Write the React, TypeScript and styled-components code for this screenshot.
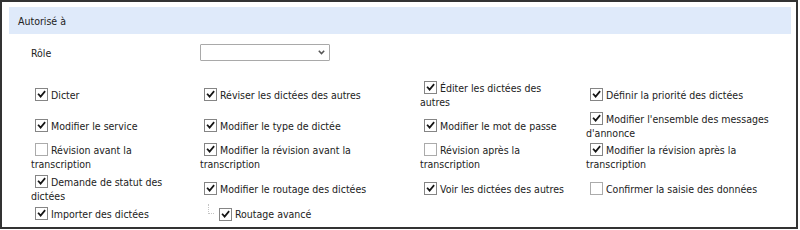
import React from "react";
import styled, { createGlobalStyle } from "styled-components";

const GlobalStyle = createGlobalStyle`
  html, body {
    margin: 0;
    padding: 0;
    background: #ffffff;
  }
  body {
    font-family: "DejaVu Sans Condensed", "DejaVu Sans", sans-serif;
    font-stretch: condensed;
    font-size: 10.5px;
    color: #222222;
  }
`;

const Frame = styled.section`
  box-sizing: border-box;
  width: 798px;
  height: 229px;
  border: 2px solid #333333;
  padding: 5px 5px 0 7px;
  background: #ffffff;
`;

const Header = styled.div`
  height: 27px;
  display: flex;
  align-items: center;
  padding-left: 9px;
  background: #dfeafa;
`;

const Body = styled.div`
  padding-left: 22px;
`;

const Grid = styled.div`
  display: grid;
  grid-template-columns: 149px 200px 146px 195px;
  column-gap: 20px;
`;

const RoleRow = styled(Grid)`
  margin-top: 10px;
  height: 17px;
  align-items: center;
`;

const RoleLabel = styled.span`
  line-height: 14px;
`;

const SelectWrap = styled.div`
  position: relative;
  width: 130px;
  height: 17px;
`;

const Select = styled.select`
  appearance: none;
  box-sizing: border-box;
  width: 100%;
  height: 100%;
  margin: 0;
  border: 1px solid #a9a9a9;
  border-radius: 1px;
  background: #ffffff;
  font: inherit;
`;

const Chevron = styled.svg`
  position: absolute;
  right: 5px;
  top: 6px;
  pointer-events: none;
`;

const Options = styled(Grid)`
  margin-top: 18px;
  grid-template-rows: 31px 31px 32px 31px 20px;
  align-items: center;
`;

const Cell = styled.label`
  display: block;
  line-height: 14px;
`;

const ChildCell = styled.label`
  display: flex;
  align-items: center;
  line-height: 14px;
`;

const Box = styled.span<{ $checked: boolean }>`
  display: inline-block;
  flex: none;
  box-sizing: border-box;
  width: 13px;
  height: 13px;
  margin: 0 3px 0 4px;
  vertical-align: -2px;
  border: 1px solid ${({ $checked }) => ($checked ? "#858585" : "#ababab")};
  background: #ffffff;
  position: relative;

  svg {
    position: absolute;
    left: 1px;
    top: 1px;
  }
`;

const TreeLine = styled.span`
  flex: none;
  align-self: flex-start;
  width: 5px;
  height: 9px;
  margin: -3px 1px 0 8px;
  border-left: 1px dotted #c4c4c4;
  border-bottom: 1px dotted #c4c4c4;
`;

function Check({ checked }: { checked: boolean }) {
  return (
    <Box $checked={checked}>
      {checked && (
        <svg width="9" height="9" viewBox="0 0 9 9">
          <path
            d="M1.6 4.4 L3.6 6.6 L7.6 1.8"
            fill="none"
            stroke="#151515"
            strokeWidth="1.7"
            strokeLinecap="square"
          />
        </svg>
      )}
    </Box>
  );
}

type Option = { label: string; checked: boolean; child?: boolean };

const options: Option[] = [
  { label: "Dicter", checked: true },
  { label: "Réviser les dictées des autres", checked: true },
  { label: "Éditer les dictées des autres", checked: true },
  { label: "Définir la priorité des dictées", checked: true },
  { label: "Modifier le service", checked: true },
  { label: "Modifier le type de dictée", checked: true },
  { label: "Modifier le mot de passe", checked: true },
  { label: "Modifier l'ensemble des messages d'annonce", checked: true },
  { label: "Révision avant la transcription", checked: false },
  { label: "Modifier la révision avant la transcription", checked: true },
  { label: "Révision après la transcription", checked: false },
  { label: "Modifier la révision après la transcription", checked: true },
  { label: "Demande de statut des dictées", checked: true },
  { label: "Modifier le routage des dictées", checked: true },
  { label: "Voir les dictées des autres", checked: true },
  { label: "Confirmer la saisie des données", checked: false },
  { label: "Importer des dictées", checked: true },
  { label: "Routage avancé", checked: true, child: true },
];

export default function App() {
  return (
    <>
      <GlobalStyle />
      <Frame>
        <Header>Autorisé à</Header>
        <Body>
          <RoleRow>
            <RoleLabel>Rôle</RoleLabel>
            <SelectWrap>
              <Select defaultValue="">
                <option value=""></option>
              </Select>
              <Chevron width="7" height="5" viewBox="0 0 7 5">
                <path d="M0.8 0.8 L3.5 3.6 L6.2 0.8" fill="none" stroke="#555" strokeWidth="1.5" />
              </Chevron>
            </SelectWrap>
          </RoleRow>
          <Options>
            {options.map((o) =>
              o.child ? (
                <ChildCell key={o.label}>
                  <TreeLine />
                  <Check checked={o.checked} />
                  {o.label}
                </ChildCell>
              ) : (
                <Cell key={o.label}>
                  <Check checked={o.checked} />
                  {o.label}
                </Cell>
              )
            )}
          </Options>
        </Body>
      </Frame>
    </>
  );
}
